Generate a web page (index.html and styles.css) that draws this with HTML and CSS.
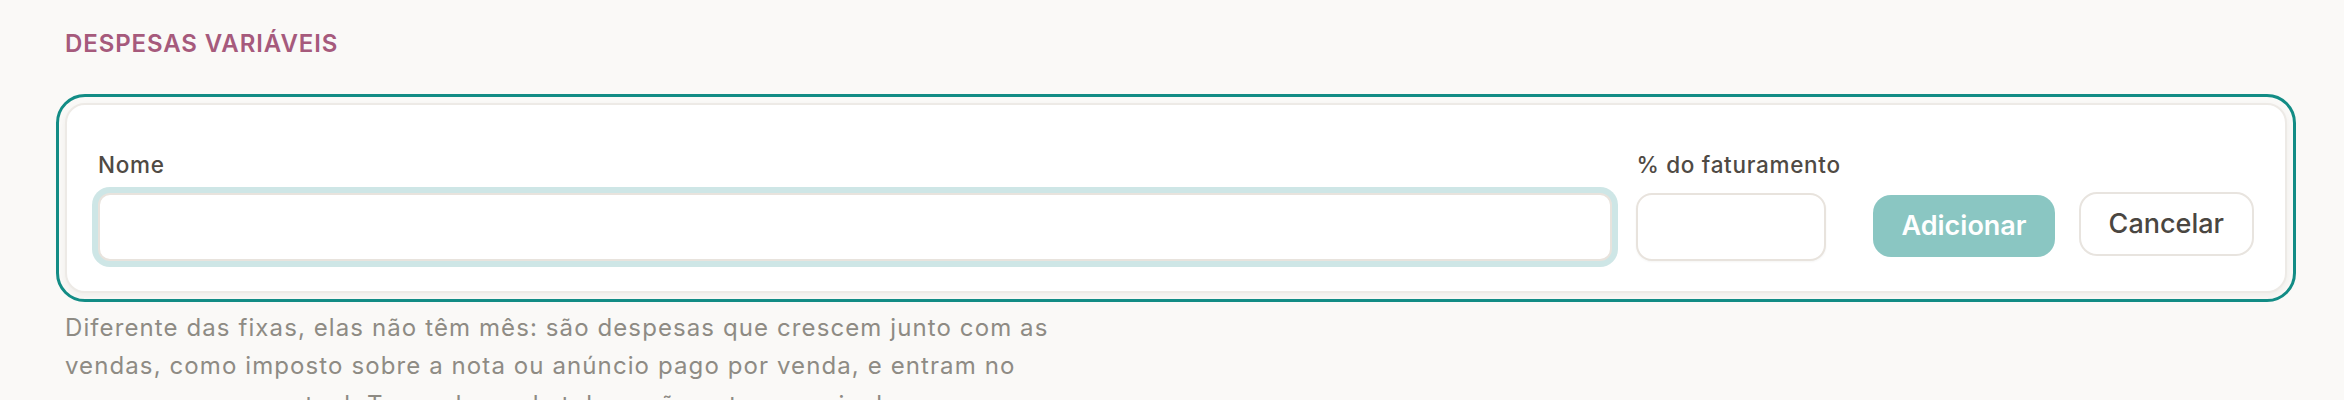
FILE: index.html
```html
<!DOCTYPE html>
<html lang="pt-BR">
<head>
    <meta charset="UTF-8">
    <meta name="viewport" content="width=device-width, initial-scale=1.0">
    <title>Despesas variáveis</title>
    <link rel="stylesheet" href="styles.css">
</head>
<body>
    <section class="section">
        <h2 class="section-title">Despesas variáveis</h2>

        <form class="card" onsubmit="return false">
            <div class="field field-grow">
                <label class="field-label" for="nomeInput">Nome</label>
                <input class="field-input is-focused" type="text" id="nomeInput">
            </div>

            <div class="field field-small">
                <label class="field-label" for="percentInput">% do faturamento</label>
                <input class="field-input" type="text" id="percentInput">
            </div>

            <div class="actions">
                <button class="btn btn-primary" type="submit">Adicionar</button>
                <button class="btn btn-ghost" type="button">Cancelar</button>
            </div>
        </form>

        <p class="section-text">
            Diferente das fixas, elas não têm mês: são despesas que crescem junto com as
            vendas, como imposto sobre a nota ou anúncio pago por venda, e entram no
            preço como percentual. Taxas de marketplace não entram aqui, elas moram nos
            canais de venda.
        </p>
    </section>
</body>
</html>
```

FILE: styles.css
```css
body {
    margin: 0;
    background-color: #faf9f7;
    font-family: Inter, "Noto Sans", sans-serif;
    color: #4a4641;
}

.section {
    padding: 29px 57px 0 65px;
}

.section-title {
    margin: 0 0 45px;
    font-size: 24px;
    font-weight: 600;
    letter-spacing: 0.9px;
    line-height: 29px;
    text-transform: uppercase;
    color: #a65a7c;
}

.card {
    display: flex;
    align-items: flex-end;
    gap: 24px;
    padding: 43px 31px 30px;
    background-color: #ffffff;
    border: 2px solid #edeae6;
    border-radius: 20px;
    outline: 3px solid #128c85;
    outline-offset: 6px;
    box-shadow: 0 3px 6px rgba(60, 50, 40, 0.06);
}

.field {
    display: flex;
    flex-direction: column;
}

.field-grow {
    flex: 1;
}

.field-small {
    width: 190px;
}

.field-label {
    margin-bottom: 11px;
    font-size: 22.5px;
    font-weight: 500;
    line-height: 34px;
    letter-spacing: 0.7px;
    white-space: nowrap;
    color: #4f4a44;
}

.field-input {
    box-sizing: border-box;
    height: 68px;
    padding: 0 18px;
    border: 2px solid #e8e3dd;
    border-radius: 16px;
    background-color: #ffffff;
    font-family: inherit;
    font-size: 22.5px;
    outline: none;
    box-shadow: 0 1px 2px rgba(60, 50, 40, 0.05);
}

.field-input.is-focused {
    border-radius: 12px;
    box-shadow: 0 0 0 6px #cee6e6;
}

.actions {
    display: flex;
    align-items: flex-end;
    gap: 24px;
    margin-left: 23px;
}

.btn {
    appearance: none;
    box-sizing: border-box;
    cursor: pointer;
    font-family: inherit;
    font-size: 27px;
    line-height: 32px;
    border-radius: 18px;
}

.btn-primary {
    margin-bottom: 4px;
    padding: 15px 28px;
    border: none;
    background-color: #8ac6c2;
    color: #ffffff;
    font-weight: 600;
}

.btn-ghost {
    margin-bottom: 5px;
    padding: 14px 28px;
    border: 2px solid #e8e4df;
    background-color: #ffffff;
    color: #4a4641;
    font-weight: 500;
}

.section-text {
    max-width: 1000px;
    margin: 16px 0 0;
    font-size: 24px;
    line-height: 38.3px;
    letter-spacing: 1.1px;
    color: #8e8b84;
}
```
